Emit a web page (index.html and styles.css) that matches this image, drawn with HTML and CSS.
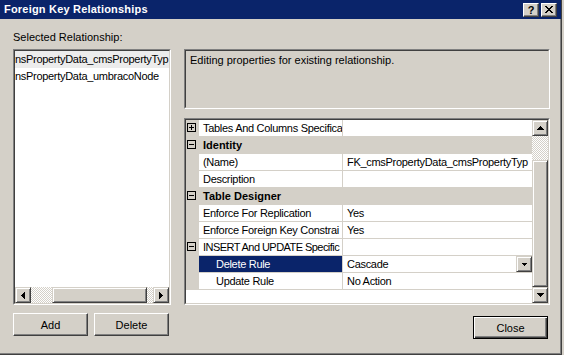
FILE: index.html
```html
<!DOCTYPE html>
<html>
<head>
<meta charset="utf-8">
<title>Foreign Key Relationships</title>
<link rel="stylesheet" href="styles.css">
</head>
<body>
<div class="window">
  <div class="titlebar">
    <span class="title">Foreign Key Relationships</span>
    <div class="cbtns">
      <div class="cbtn help">?</div>
      <div class="cbtn">
        <svg width="8" height="7" viewBox="0 0 8 7"><path d="M0 0h2v1H0zM6 0h2v1H6zM1 1h2v1H1zM5 1h2v1H5zM2 2h4v1H2zM3 3h2v1H3zM2 4h4v1H2zM1 5h2v1H1zM5 5h2v1H5zM0 6h2v1H0zM6 6h2v1H6z" fill="#000"/></svg>
      </div>
    </div>
  </div>

  <div class="content">
    <div class="left">
      <div class="label">Selected Relationship:</div>
      <div class="sunken listbox">
        <div class="sunken-in col">
          <div class="items">
            <div class="item selected">nsPropertyData_cmsPropertyTyp</div>
            <div class="item">nsPropertyData_umbracoNode</div>
          </div>
          <div class="hscroll">
            <div class="sbtn"><svg width="4" height="7" viewBox="0 0 4 7"><path d="M3 0h1v7H3zM2 1h1v5H2zM1 2h1v3H1zM0 3h1v1H0z" fill="#000"/></svg></div>
            <div class="track htrack1"></div>
            <div class="sbtn hthumb"></div>
            <div class="track grow"></div>
            <div class="sbtn"><svg width="4" height="7" viewBox="0 0 4 7"><path d="M0 0h1v7H0zM1 1h1v5H1zM2 2h1v3H2zM3 3h1v1H3z" fill="#000"/></svg></div>
          </div>
        </div>
      </div>
      <div class="btnrow">
        <button class="btn">Add</button>
        <button class="btn">Delete</button>
      </div>
    </div>

    <div class="right">
      <div class="sunken desc">
        <div class="sunken-in desc-in">Editing properties for existing relationship.</div>
      </div>

      <div class="sunken grid">
        <div class="sunken-in row-wrap">
          <div class="rows">
            <div class="row">
              <div class="gutter"><svg class="box" width="9" height="9" viewBox="0 0 9 9"><path d="M0 0h9v1H0zM0 8h9v1H0zM0 0h1v9H0zM8 0h1v9H8zM2 4h5v1H2zM4 2h1v5H4z" fill="#000"/></svg></div>
              <div class="name">Tables And Columns Specifica</div>
              <div class="value"></div>
            </div>
            <div class="row cat">
              <div class="gutter"><svg class="box" width="9" height="9" viewBox="0 0 9 9"><path d="M0 0h9v1H0zM0 8h9v1H0zM0 0h1v9H0zM8 0h1v9H8zM2 4h5v1H2z" fill="#000"/></svg></div>
              <div class="catname">Identity</div>
            </div>
            <div class="row">
              <div class="gutter"></div>
              <div class="name">(Name)</div>
              <div class="value">FK_cmsPropertyData_cmsPropertyTyp</div>
            </div>
            <div class="row">
              <div class="gutter"></div>
              <div class="name">Description</div>
              <div class="value"></div>
            </div>
            <div class="row cat">
              <div class="gutter"><svg class="box" width="9" height="9" viewBox="0 0 9 9"><path d="M0 0h9v1H0zM0 8h9v1H0zM0 0h1v9H0zM8 0h1v9H8zM2 4h5v1H2z" fill="#000"/></svg></div>
              <div class="catname">Table Designer</div>
            </div>
            <div class="row">
              <div class="gutter"></div>
              <div class="name">Enforce For Replication</div>
              <div class="value">Yes</div>
            </div>
            <div class="row">
              <div class="gutter"></div>
              <div class="name">Enforce Foreign Key Constrai</div>
              <div class="value">Yes</div>
            </div>
            <div class="row">
              <div class="gutter"><svg class="box" width="9" height="9" viewBox="0 0 9 9"><path d="M0 0h9v1H0zM0 8h9v1H0zM0 0h1v9H0zM8 0h1v9H8zM2 4h5v1H2z" fill="#000"/></svg></div>
              <div class="name tight">INSERT And UPDATE Specific</div>
              <div class="value"></div>
            </div>
            <div class="row">
              <div class="gutter"></div>
              <div class="name sub active">Delete Rule</div>
              <div class="value combo">
                <span class="combo-text">Cascade</span>
                <div class="sbtn dd"><svg width="5" height="3" viewBox="0 0 5 3"><path d="M0 0h5v1H0zM1 1h3v1H1zM2 2h1v1H2z" fill="#000"/></svg></div>
              </div>
            </div>
            <div class="row">
              <div class="gutter"></div>
              <div class="name sub">Update Rule</div>
              <div class="value">No Action</div>
            </div>
          </div>
          <div class="vscroll">
            <div class="sbtn"><svg width="7" height="4" viewBox="0 0 7 4"><path d="M3 0h1v1H3zM2 1h3v1H2zM1 2h5v1H1zM0 3h7v1H0z" fill="#000"/></svg></div>
            <div class="track vtrack1"></div>
            <div class="sbtn vthumb"></div>
            <div class="sbtn"><svg width="7" height="4" viewBox="0 0 7 4"><path d="M0 0h7v1H0zM1 1h5v1H1zM2 2h3v1H2zM3 3h1v1H3z" fill="#000"/></svg></div>
          </div>
        </div>
      </div>

      <div class="footer">
        <button class="btn default">Close</button>
      </div>
    </div>
  </div>
</div>
</body>
</html>
```

FILE: styles.css
```css
html, body {
  margin: 0;
  padding: 0;
}

body {
  width: 564px;
  height: 355px;
  overflow: hidden;
  background: #d4d0c8;
  font-family: "Liberation Sans", Arial, sans-serif;
  font-size: 11px;
  color: #000;
}

.window {
  width: 562px;
  height: 355px;
  box-sizing: border-box;
  border-right: 1px solid #404040;
  border-bottom: 1px solid #404040;
  box-shadow: inset -1px -1px #808080;
  display: flex;
  flex-direction: column;
  background: #d4d0c8;
}

/* title bar */
.titlebar {
  height: 19px;
  flex: none;
  background: #0a246a;
  color: #fff;
  display: flex;
  align-items: center;
  padding: 0 4px 0 4px;
}

.title {
  font-weight: bold;
  letter-spacing: 0.2px;
  line-height: 19px;
}

.cbtns {
  margin-left: auto;
  display: flex;
  gap: 2px;
}

.cbtn {
  width: 16px;
  height: 14px;
  box-sizing: border-box;
  background: #d4d0c8;
  border: 1px solid;
  border-color: #fff #404040 #404040 #fff;
  box-shadow: inset -1px -1px #808080;
  display: flex;
  align-items: center;
  justify-content: center;
  color: #000;
}

.help {
  font-weight: bold;
  font-size: 11px;
  line-height: 12px;
}

/* content */
.content {
  flex: 1;
  display: flex;
  gap: 13px;
  padding-left: 13px;
}

.left {
  width: 158px;
  padding-top: 12px;
  display: flex;
  flex-direction: column;
}

.label {
  height: 18px;
  line-height: 13px;
}

/* sunken frames */
.sunken {
  box-sizing: border-box;
  border: 1px solid;
  border-color: #808080 #fff #fff #808080;
}

.sunken-in {
  box-sizing: border-box;
  height: 100%;
  border: 1px solid;
  border-color: #404040 #d4d0c8 #d4d0c8 #404040;
}

.col {
  display: flex;
  flex-direction: column;
}

.listbox {
  height: 256px;
}

.items {
  flex: 1;
  background: #fff;
  overflow: hidden;
}

.item {
  height: 17px;
  line-height: 17px;
  white-space: nowrap;
  overflow: hidden;
  letter-spacing: -0.3px;
}

.item.selected {
  background: #ececec;
}

/* scrollbar parts */
.hscroll {
  height: 16px;
  display: flex;
  flex: none;
}

.track {
  background-color: #fff;
  background-image: conic-gradient(#fff 25%, #d4d0c8 0 50%, #fff 0 75%, #d4d0c8 0);
  background-size: 2px 2px;
}

.htrack1 { width: 21px; }
.grow { flex: 1; }

.sbtn {
  width: 16px;
  height: 16px;
  flex: none;
  box-sizing: border-box;
  background: #d4d0c8;
  border: 1px solid;
  border-color: #d4d0c8 #404040 #404040 #d4d0c8;
  box-shadow: inset 1px 1px #fff, inset -1px -1px #808080;
  display: flex;
  align-items: center;
  justify-content: center;
}

.hthumb { width: 95px; }

.vscroll {
  width: 16px;
  flex: none;
  display: flex;
  flex-direction: column;
}

.vtrack1 { height: 24px; }
.vthumb { height: 127px; }

/* buttons */
.btnrow {
  margin-top: 8px;
  display: flex;
  gap: 6px;
}

.btn {
  width: 75px;
  height: 23px;
  margin: 0;
  padding: 0;
  font: inherit;
  color: #000;
  background: #d4d0c8;
  box-sizing: border-box;
  border: 1px solid;
  border-color: #fff #404040 #404040 #fff;
  box-shadow: inset -1px -1px #808080;
}

.btn.default {
  border: 1px solid #000;
  box-shadow: inset 1px 1px #fff, inset -1px -1px #404040, inset -2px -2px #808080;
}

/* right column */
.right {
  width: 366px;
  padding-top: 30px;
  display: flex;
  flex-direction: column;
}

.desc {
  height: 60px;
}

.desc-in {
  padding: 3px 4px;
  line-height: 13px;
}

.grid {
  margin-top: 9px;
  height: 187px;
}

.row-wrap {
  display: flex;
}

.rows {
  flex: 1;
  background: #fff;
  overflow: hidden;
}

.row {
  height: 17px;
  display: flex;
}

.gutter {
  width: 13px;
  flex: none;
  background: #d4d0c8;
}

.box {
  display: block;
  margin: 3px 0 0 1px;
}

.name, .value {
  box-sizing: border-box;
  height: 17px;
  border-bottom: 1px solid #d4d0c8;
  padding: 1px 0 0 4px;
  line-height: 15px;
  white-space: nowrap;
  overflow: hidden;
  letter-spacing: -0.3px;
}

.name {
  width: 144px;
  flex: none;
  border-right: 1px solid #d4d0c8;
}

.name.tight {
  letter-spacing: -0.55px;
}

.name.sub {
  padding-left: 17px;
}

.name.active {
  background: #0a246a;
  color: #fff;
}

.value {
  flex: 1;
  min-width: 0;
}

.row.cat {
  background: #d4d0c8;
}

.catname {
  flex: 1;
  font-weight: bold;
  padding: 1px 0 0 4px;
  line-height: 15px;
}

.value.combo {
  display: flex;
  padding: 0;
}

.combo-text {
  flex: 1;
  padding: 1px 0 0 4px;
  line-height: 15px;
}

.sbtn.dd {
  width: 16px;
  height: 16px;
}

.footer {
  margin-top: 11px;
  display: flex;
  justify-content: flex-end;
  padding-right: 2px;
}
```
